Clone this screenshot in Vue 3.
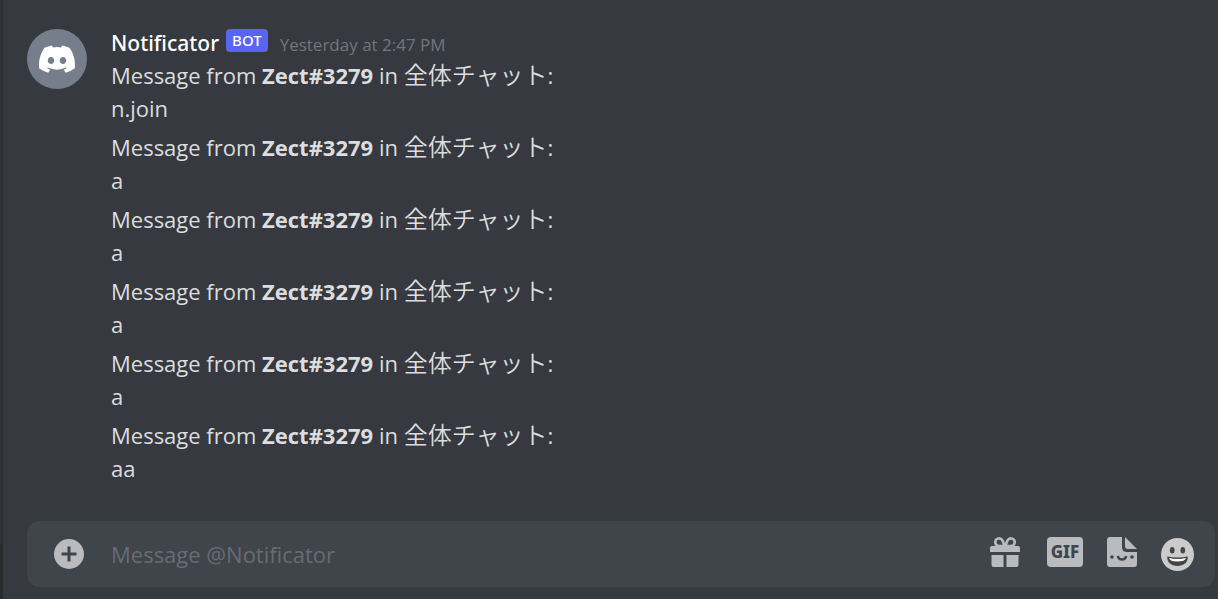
<script setup>
import { ref } from 'vue'

const draft = ref('')
const author = 'Zect#3279'
const channel = '全体チャット'
const messages = ['n.join', 'a', 'a', 'a', 'a', 'aa']
</script>

<template>
  <div class="app">
    <div class="rail"><div class="rail-list"></div><div class="rail-user"></div></div>
    <main class="chat">
      <section class="group">
        <svg class="avatar" viewBox="0 0 60 60" role="img" aria-label="Notificator avatar">
          <circle cx="30" cy="30" r="30" fill="#777e8b" />
          <path transform="translate(12 16.5) scale(.283)" fill="#fff" d="M107.7,8.07A105.15,105.15,0,0,0,81.47,0a72.06,72.06,0,0,0-3.36,6.83A97.68,97.68,0,0,0,49,6.83,72.37,72.37,0,0,0,45.64,0,105.89,105.89,0,0,0,19.39,8.09C2.79,32.65-1.71,56.6.54,80.21h0A105.73,105.73,0,0,0,32.71,96.36,77.7,77.7,0,0,0,39.6,85.25a68.42,68.42,0,0,1-10.85-5.18c.91-.66,1.8-1.34,2.66-2a75.57,75.57,0,0,0,64.32,0c.87.71,1.76,1.39,2.66,2a68.68,68.68,0,0,1-10.87,5.19,77,77,0,0,0,6.89,11.1A105.25,105.25,0,0,0,126.6,80.22h0C129.24,52.84,122.09,29.11,107.7,8.07ZM42.45,65.69C36.18,65.69,31,60,31,53s5-12.74,11.43-12.74S54,46,53.89,53,48.84,65.69,42.45,65.69Zm42.24,0C78.41,65.69,73.25,60,73.25,53s5-12.74,11.44-12.74S96.23,46,96.12,53,91.08,65.69,84.69,65.69Z" />
        </svg>
        <div class="thread">
          <header class="head">
            <span class="name">Notificator</span>
            <span class="bot">BOT</span>
            <time class="time">Yesterday at 2:47 PM</time>
          </header>
          <div class="messages">
            <div v-for="(text, i) in messages" :key="i" class="message">
              <div>Message from <strong>{{ author }}</strong> in <span class="channel" lang="ja">{{ channel }}</span>:</div>
              <div>{{ text }}</div>
            </div>
          </div>
        </div>
      </section>

      <form class="composer" @submit.prevent>
        <button class="tool" type="button" aria-label="Attach">
          <svg width="30" height="30" viewBox="0 0 30 30">
            <circle cx="15" cy="15" r="15" fill="#b9bbbe" />
            <path d="M15 7.5v15M7.5 15h15" stroke="#40444b" stroke-width="3" />
          </svg>
        </button>
        <input v-model="draft" class="field" type="text" placeholder="Message @Notificator" aria-label="Message @Notificator" />
        <div class="tools">
          <button class="tool" type="button" aria-label="Send a gift">
            <svg width="33" height="36" viewBox="0 0 33 36">
              <g fill="#b9bbbe">
                <path d="M2 10H28Q30 10 30 12V16H0V12Q0 10 2 10Z" />
                <path d="M1.5 19H13.5V31H4Q1.5 31 1.5 28.5Z" />
                <path d="M16.5 19H28.5V28.5Q28.5 31 26 31H16.5Z" />
              </g>
              <g fill="none" stroke="#b9bbbe" stroke-width="2.6">
                <path d="M14.3 10H9.2A3.8 3.8 0 1 1 12.4 4.3Q13.8 6.6 14.3 10Z" />
                <path d="M15.7 10H20.8A3.8 3.8 0 1 0 17.6 4.3Q16.2 6.6 15.7 10Z" />
              </g>
            </svg>
          </button>
          <button class="tool gif" type="button">GIF</button>
          <button class="tool" type="button" aria-label="Open sticker picker">
            <svg width="30" height="36" viewBox="0 0 30 36">
              <path fill="#b9bbbe" d="M3 1H15V11Q15 16 20 16H30V28Q30 31 27 31H3Q0 31 0 28V4Q0 1 3 1Z" />
              <path fill="#b9bbbe" d="M18 1L30 13H21Q18 13 18 10Z" />
              <circle cx="5" cy="21" r="1.8" fill="#40444b" />
              <circle cx="25" cy="21" r="1.8" fill="#40444b" />
              <path d="M10.8 20Q11.5 23.5 15 23.5T19.2 20" fill="none" stroke="#40444b" stroke-width="2.4" />
            </svg>
          </button>
          <button class="tool" type="button" aria-label="Select emoji">
            <svg width="33" height="36" viewBox="0 0 33 36">
              <circle cx="16.5" cy="18.5" r="16.5" fill="#cbcbcb" />
              <ellipse cx="11.2" cy="14.3" rx="2.3" ry="3.3" fill="#454545" />
              <ellipse cx="21.8" cy="14.3" rx="2.3" ry="3.3" fill="#454545" />
              <path d="M6.3 20.5Q16.5 22.5 26.7 20.5C27.3 26.5 22.5 30 16.5 30S5.7 26.5 6.3 20.5Z" fill="#454545" />
              <path d="M8 22Q16.5 23.8 25 22Q24 25.6 16.5 25.6T8 22Z" fill="#fff" />
            </svg>
          </button>
        </div>
      </form>
    </main>
  </div>
</template>

<style>
body {
  margin: 0;
  background: #36393f;
}
</style>

<style scoped>
.app {
  display: flex;
  min-height: 100vh;
  background: #36393f;
  color: #dcddde;
  font-family: "Open Sans", "Noto Sans CJK JP", sans-serif;
  font-size: 22px;
  font-weight: 400;
  line-height: 33px;
}

.rail {
  display: flex;
  flex-direction: column;
  width: 3px;
}

.rail-list {
  flex: 1;
  background: #2f3136;
}

.rail-user {
  height: 55px;
  background: #292b2f;
}

.chat {
  flex: 1;
  min-width: 0;
  display: flex;
  flex-direction: column;
  justify-content: space-between;
  gap: 24px;
  box-sizing: border-box;
  padding: 27px 3px 12px 24px;
}

.group {
  display: flex;
  gap: 24px;
}

.avatar {
  flex: none;
  width: 60px;
  height: 60px;
  margin-top: 2px;
}

.thread {
  min-width: 0;
}

.head {
  display: flex;
  align-items: center;
  height: 32px;
}

.name {
  color: #fff;
  font-family: "Noto Sans", sans-serif;
  font-size: 21px;
  font-weight: 500;
}

.bot {
  margin: 0 12px 5px 7px;
  padding: 0 6px;
  border-radius: 4px;
  background: #5865f2;
  color: #fff;
  font-family: "Noto Sans", sans-serif;
  font-size: 15px;
  font-weight: 500;
  line-height: 23px;
}

.time {
  padding-top: 3px;
  color: #72767d;
  font-size: 17px;
  line-height: 30px;
}

.messages {
  display: flex;
  flex-direction: column;
  gap: 6px;
}

.message {
  overflow-wrap: anywhere;
}

.message strong {
  font-weight: 700;
}

.channel {
  font-family: "Noto Sans CJK JP", sans-serif;
  font-size: 24px;
  font-weight: 350;
  line-height: 24px;
}

.composer {
  display: flex;
  align-items: center;
  height: 66px;
  box-sizing: border-box;
  padding: 0 21px 0 27px;
  border-radius: 12px;
  background: #40444b;
}

.tool {
  flex: none;
  display: block;
  padding: 0;
  border: 0;
  background: none;
  cursor: pointer;
}

.tool svg {
  display: block;
}

.field {
  flex: 1;
  min-width: 0;
  height: 36px;
  margin: 0 24px 0 27px;
  padding: 0;
  border: 0;
  outline: 0;
  background: none;
  color: #dcddde;
  font: inherit;
}

.field::placeholder {
  color: #686c73;
  opacity: 1;
}

.tools {
  display: flex;
  gap: 24px;
}

.gif {
  width: 36px;
  height: 30px;
  margin-top: 1px;
  border-radius: 4px;
  background: #b9bbbe;
  color: #40444b;
  font-family: "Noto Sans", sans-serif;
  font-size: 17px;
  font-weight: 800;
  line-height: 30px;
}
</style>
